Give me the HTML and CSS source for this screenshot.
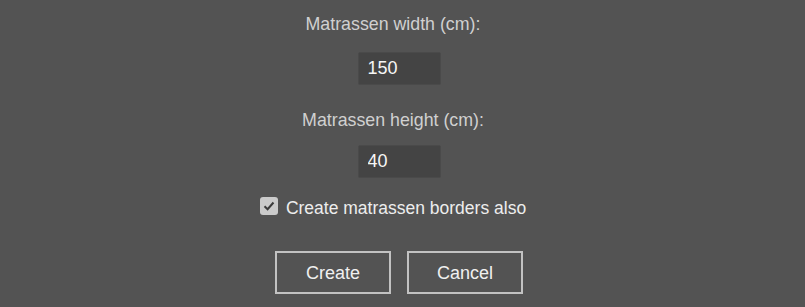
FILE: index.html
```html
<!DOCTYPE html>
<html lang="en">
<head>
    <meta charset="UTF-8">
    <title>Matrassen</title>
    <link rel="stylesheet" href="styles.css">
</head>
<body>
    <div class="dialog">
        <label class="field-label">Matrassen width (cm):</label>
        <input class="field field-width" type="text" value="150">
        <label class="field-label label-height">Matrassen height (cm):</label>
        <input class="field field-height" type="text" value="40">
        <label class="check">
            <span class="box">
                <svg width="12" height="10" viewBox="0 0 12 10"><path d="M1.5 5.2 L4.6 8.2 L10.5 1.5" fill="none" stroke="#3c3c3c" stroke-width="2"/></svg>
            </span>
            Create matrassen borders also
        </label>
        <div class="buttons">
            <button class="btn">Create</button>
            <button class="btn">Cancel</button>
        </div>
    </div>
</body>
</html>
```

FILE: styles.css
```css
*{
    margin: 0;
    padding: 0;
    box-sizing: border-box;
}
body{
    background-color: #535353;
    font-family: "Liberation Sans", Arial, sans-serif;
    color: #e6e6e6;
}
.dialog{
    display: flex;
    flex-direction: column;
    align-items: center;
    padding-top: 14px;
    padding-right: 7px;
}
.field-label{
    font-size: 17.8px;
    line-height: 20px;
    color: #d0d0d0;
    margin-right: 12px;
}
.label-height{
    margin-top: 25px;
}
.field{
    width: 83px;
    height: 33px;
    background-color: #444444;
    border: 1px solid #4a4a4a;
    border-radius: 2px;
    color: #f6f6f6;
    font-family: inherit;
    font-size: 18px;
    padding-left: 9px;
    outline: none;
}
.field-width{
    margin-top: 18px;
}
.field-height{
    margin-top: 15px;
}
.check{
    display: flex;
    gap: 8px;
    font-size: 17.5px;
    line-height: 20px;
    color: #ededed;
    margin-top: 20px;
    margin-right: 12px;
}
.box{
    width: 18px;
    height: 18px;
    margin-top: -1px;
    background-color: #cbcbcb;
    border-radius: 3px;
    display: flex;
    align-items: center;
    justify-content: center;
}
.buttons{
    display: flex;
    gap: 16px;
    margin-top: 33px;
}
.btn{
    width: 116px;
    height: 43px;
    background-color: #535353;
    border: 2px solid #c2c2c2;
    color: #f0f0f0;
    font-family: inherit;
    font-size: 18px;
    padding-top: 2px;
}
```
